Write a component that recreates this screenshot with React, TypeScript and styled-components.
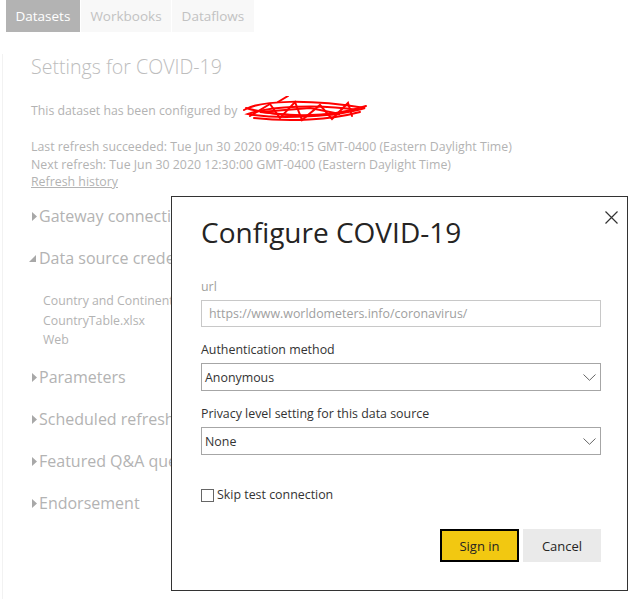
import styled, { createGlobalStyle } from 'styled-components';

const GlobalStyle = createGlobalStyle`
  html, body {
    margin: 0;
    padding: 0;
    background: #ffffff;
  }
  body {
    font-family: 'Open Sans', 'Noto Sans', sans-serif;
    width: 629px;
    height: 599px;
    overflow: hidden;
  }
`;

const tabs = ['Datasets', 'Workbooks', 'Dataflows'];

const sections = [
  { title: 'Gateway connection', open: false },
  {
    title: 'Data source credentials',
    open: true,
    items: ['Country and Continent', 'CountryTable.xlsx', 'Web'],
  },
  { title: 'Parameters', open: false },
  { title: 'Scheduled refresh', open: false },
  { title: 'Featured Q&A questions', open: false },
  { title: 'Endorsement', open: false },
];

const Scribble = () => (
  <ScribbleSvg width="130" height="28" viewBox="0 0 130 28">
    <g fill="none" stroke="#ff0000" strokeWidth="2" strokeLinecap="round">
      <path d="M4 14 C 20 4, 70 3, 125 12 C 100 20, 40 24, 8 18 C 30 10, 80 8, 118 14" />
      <path d="M10 20 L30 8 L40 22 L55 6 L62 24 L80 9 L92 23 L108 7 L112 20" />
      <path d="M38 6 L48 0" />
      <path d="M6 12 C 40 22, 90 22, 126 10" />
      <path d="M20 16 L70 12 L100 18 L60 20 Z" />
      <path d="M14 22 C 50 26, 90 24, 120 16" />
    </g>
  </ScribbleSvg>
);

const Triangle = ({ open }: { open: boolean }) =>
  open ? (
    <svg width="7" height="7" viewBox="0 0 7 7">
      <path d="M7 0 L7 7 L0 7 Z" fill="#a8a8a8" />
    </svg>
  ) : (
    <svg width="5" height="9" viewBox="0 0 5 9">
      <path d="M0 0 L5 4.5 L0 9 Z" fill="#a8a8a8" />
    </svg>
  );

const Chevron = () => (
  <svg width="13" height="7" viewBox="0 0 13 7">
    <path d="M0.5 0.5 L6.5 6.3 L12.5 0.5" fill="none" stroke="#666" strokeWidth="1" />
  </svg>
);

const App = () => {
  return (
    <>
      <GlobalStyle />
      <Page>
        <TabBar>
          {tabs.map((tab, index) => (
            <Tab key={tab} $active={index === 0}>
              {tab}
            </Tab>
          ))}
        </TabBar>
        <Panel>
          <Title>Settings for COVID-19</Title>
          <Owner>
            This dataset has been configured by <Scribble />
          </Owner>
          <RefreshInfo>
            <div>Last refresh succeeded: Tue Jun 30 2020 09:40:15 GMT-0400 (Eastern Daylight Time)</div>
            <div>Next refresh: Tue Jun 30 2020 12:30:00 GMT-0400 (Eastern Daylight Time)</div>
            <HistoryLink>Refresh history</HistoryLink>
          </RefreshInfo>
          <Sections>
            {sections.map((section) => (
              <Section key={section.title}>
                <SectionHeader>
                  <TriangleBox $open={section.open}>
                    <Triangle open={section.open} />
                  </TriangleBox>
                  {section.title}
                </SectionHeader>
                {section.items && (
                  <SourceList>
                    {section.items.map((item) => (
                      <li key={item}>{item}</li>
                    ))}
                  </SourceList>
                )}
              </Section>
            ))}
          </Sections>
        </Panel>

        <Dialog>
          <CloseButton aria-label="Close">
            <svg width="13" height="13" viewBox="0 0 13 13">
              <path d="M0.5 0.5 L12.5 12.5 M12.5 0.5 L0.5 12.5" stroke="#333" strokeWidth="1.2" />
            </svg>
          </CloseButton>
          <DialogTitle>Configure COVID-19</DialogTitle>
          <Field $gap={27}>
            <Label $muted>url</Label>
            <TextInput>https://www.worldometers.info/coronavirus/</TextInput>
          </Field>
          <Field $gap={13}>
            <Label>Authentication method</Label>
            <Select>
              Anonymous
              <Chevron />
            </Select>
          </Field>
          <Field $gap={13}>
            <Label>Privacy level setting for this data source</Label>
            <Select>
              None
              <Chevron />
            </Select>
          </Field>
          <CheckRow>
            <CheckBox />
            Skip test connection
          </CheckRow>
          <Actions>
            <Button $primary>Sign in</Button>
            <Button>Cancel</Button>
          </Actions>
        </Dialog>
      </Page>
    </>
  );
};

const Page = styled.div`
  position: relative;
  width: 629px;
  height: 599px;
  overflow: hidden;
`;

const TabBar = styled.div`
  display: flex;
  gap: 1px;
  padding-left: 6px;
  height: 32px;
`;

const Tab = styled.div<{ $active?: boolean }>`
  display: flex;
  align-items: center;
  padding: 0 9.5px;
  font-size: 13.5px;
  background: ${({ $active }) => ($active ? '#b3b3b3' : '#f8f8f8')};
  color: ${({ $active }) => ($active ? '#ffffff' : '#c2c2c2')};
`;

const Panel = styled.div`
  margin: 22px 0 0 2px;
  padding-left: 28px;
  border-left: 1px solid #f2f2f2;
  height: 560px;
`;

const Title = styled.h1`
  margin: 0;
  font-size: 19.6px;
  font-weight: 300;
  color: #bdbdbd;
  line-height: 26px;
`;

const Owner = styled.div`
  display: flex;
  align-items: center;
  margin-top: 20px;
  font-size: 12.3px;
  color: #b3b3b3;
  height: 20px;
`;

const ScribbleSvg = styled.svg`
  margin-left: 2px;
`;

const RefreshInfo = styled.div`
  margin-top: 18px;
  font-size: 12.35px;
  line-height: 17.5px;
  color: #b3b3b3;
`;

const HistoryLink = styled.div`
  text-decoration: underline;
`;

const Sections = styled.div`
  margin-top: 13px;
`;

const Section = styled.div`
  & + & {
    margin-top: 18px;
  }
`;

const SectionHeader = styled.div`
  display: flex;
  align-items: center;
  font-size: 16px;
  line-height: 24px;
  color: #b3b3b3;
`;

const TriangleBox = styled.span<{ $open?: boolean }>`
  display: inline-flex;
  width: 8px;
  margin-left: ${({ $open }) => ($open ? '-2px' : '1px')};
  margin-right: ${({ $open }) => ($open ? '2px' : '-1px')};
  padding-top: 1px;
`;

const SourceList = styled.ul`
  list-style: none;
  margin: 21.5px 0 -3px;
  padding: 0 0 0 12px;
  font-size: 12.3px;
  line-height: 19.5px;
  color: #b3b3b3;
`;

const Dialog = styled.div`
  position: absolute;
  left: 171px;
  top: 196px;
  width: 426px;
  height: 376px;
  padding: 17px 0 0 29px;
  background: #ffffff;
  border: 1px solid #333333;
  display: flex;
  flex-direction: column;
  color: #333333;
`;

const CloseButton = styled.button`
  position: absolute;
  top: 14px;
  right: 9px;
  border: none;
  background: none;
  padding: 0;
  display: flex;
`;

const DialogTitle = styled.h2`
  margin: 0;
  font-size: 28px;
  font-weight: 400;
  line-height: 36px;
  color: #252423;
`;

const Field = styled.div<{ $gap: number }>`
  display: flex;
  flex-direction: column;
  width: 400px;
  margin-top: ${({ $gap }) => $gap}px;
`;

const Label = styled.div<{ $muted?: boolean }>`
  font-size: 12.4px;
  line-height: 20px;
  color: ${({ $muted }) => ($muted ? '#a19f9d' : '#333333')};
  margin-bottom: 3px;
`;

const TextInput = styled.div`
  box-sizing: border-box;
  height: 27px;
  border: 1px solid #c8c8c8;
  padding: 0 7px;
  display: flex;
  align-items: center;
  font-size: 12.4px;
  color: #a0a0a0;
`;

const Select = styled.div`
  box-sizing: border-box;
  height: 28px;
  border: 1px solid #a6a6a6;
  padding: 0 4px 0 3px;
  display: flex;
  align-items: center;
  justify-content: space-between;
  font-size: 12.4px;
  color: #333333;
`;

const CheckRow = styled.label`
  display: flex;
  align-items: center;
  gap: 3px;
  margin-top: 31px;
  font-size: 12.4px;
  line-height: 18px;
  color: #333333;
`;

const CheckBox = styled.span`
  box-sizing: border-box;
  width: 13px;
  height: 13px;
  border: 1px solid #666666;
`;

const Actions = styled.div`
  display: flex;
  justify-content: flex-end;
  gap: 4px;
  width: 400px;
  margin-top: 25px;
`;

const Button = styled.button<{ $primary?: boolean }>`
  box-sizing: border-box;
  width: ${({ $primary }) => ($primary ? '79px' : '78px')};
  height: 33px;
  font-family: inherit;
  font-size: 13px;
  color: #252423;
  background: ${({ $primary }) => ($primary ? '#f2c811' : '#eaeaea')};
  border: ${({ $primary }) => ($primary ? '2px solid #000000' : 'none')};
  padding: 0;
`;

export default App;
